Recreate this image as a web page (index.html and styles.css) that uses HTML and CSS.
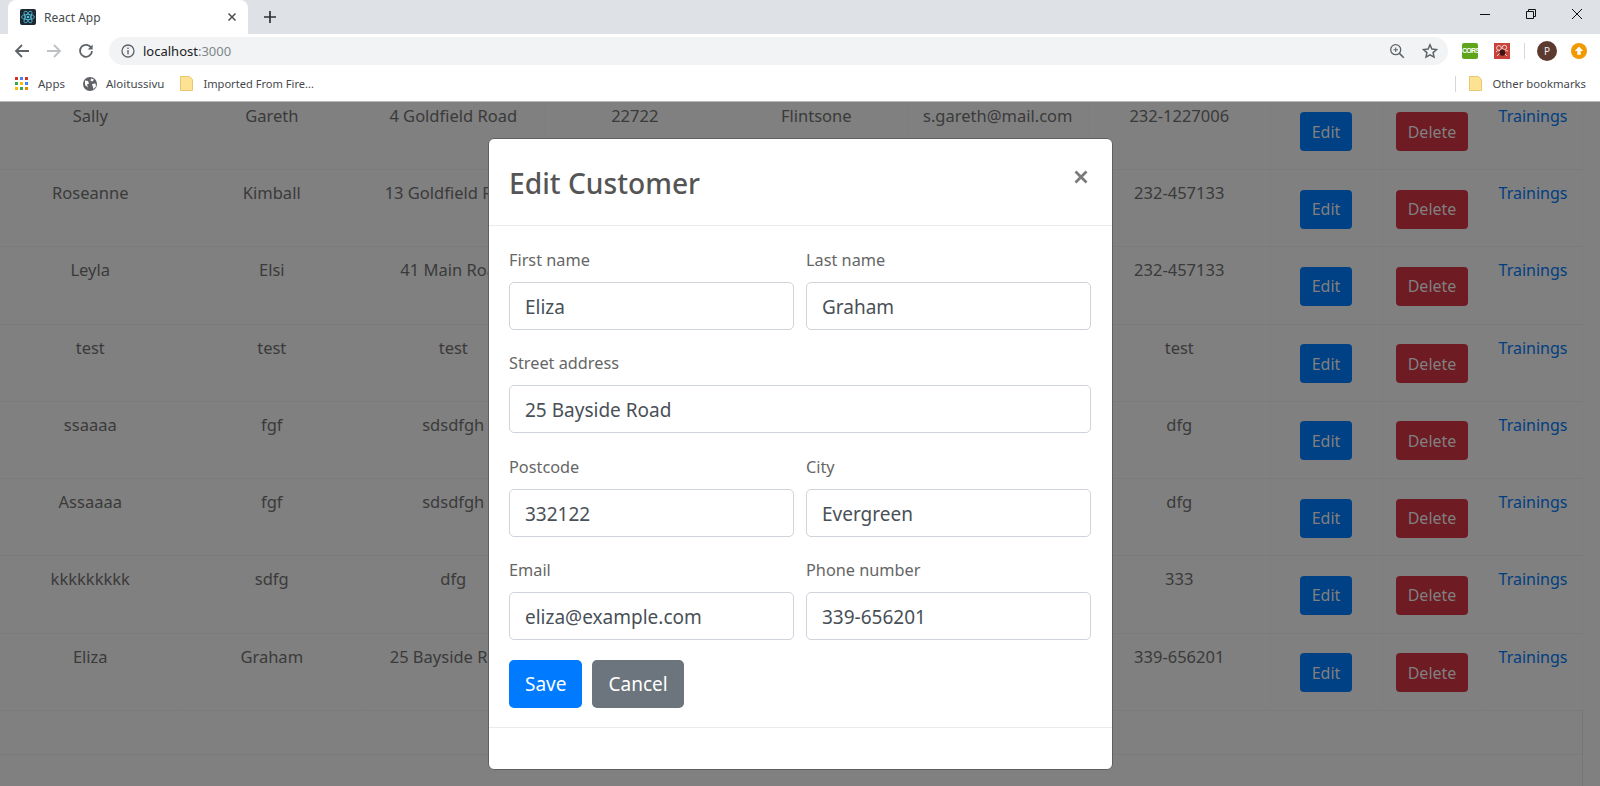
FILE: index.html
```html
<!DOCTYPE html>
<html lang="en">
<head>
  <meta charset="UTF-8" />
  <title>React App</title>
  <link rel="stylesheet" href="styles.css">
</head>
<body>
  <!-- browser chrome -->
  <div class="tabstrip">
    <div class="tab">
      <svg class="favicon" width="16" height="16" viewBox="0 0 16 16">
        <rect width="16" height="16" rx="2" fill="#1d2730"/>
        <g fill="none" stroke="#53c1de" stroke-width=".8">
          <ellipse cx="8" cy="8" rx="6.5" ry="2.6"/>
          <ellipse cx="8" cy="8" rx="6.5" ry="2.6" transform="rotate(60 8 8)"/>
          <ellipse cx="8" cy="8" rx="6.5" ry="2.6" transform="rotate(120 8 8)"/>
        </g>
        <circle cx="8" cy="8" r="1.3" fill="#53c1de"/>
      </svg>
      <span class="tab-title">React App</span>
      <svg class="tab-close" width="10" height="10" viewBox="0 0 10 10"><path d="M1.5 1.5l7 7M8.5 1.5l-7 7" stroke="#4a4d51" stroke-width="1.5"/></svg>
    </div>
    <svg class="new-tab" width="14" height="14" viewBox="0 0 14 14"><path d="M7 1v12M1 7h12" stroke="#2f3337" stroke-width="1.7"/></svg>
    <div class="window-controls">
      <svg width="12" height="12" viewBox="0 0 12 12"><path d="M1 6.5h10" stroke="#111" stroke-width="1"/></svg>
      <svg width="12" height="12" viewBox="0 0 12 12"><path d="M1.5 3.5h7v7h-7zM3.5 3.5v-2h7v7h-2" fill="none" stroke="#111" stroke-width="1"/></svg>
      <svg width="12" height="12" viewBox="0 0 12 12"><path d="M1 1l10 10M11 1l-10 10" stroke="#111" stroke-width="1"/></svg>
    </div>
  </div>

  <div class="toolbar">
    <svg class="nav-icon" width="16" height="16" viewBox="0 0 16 16"><path d="M15 8H2M8 2L2 8l6 6" fill="none" stroke="#5f6368" stroke-width="1.8"/></svg>
    <svg class="nav-icon" width="16" height="16" viewBox="0 0 16 16"><path d="M1 8h13M8 2l6 6-6 6" fill="none" stroke="#bdc1c6" stroke-width="1.8"/></svg>
    <svg class="nav-icon" width="16" height="16" viewBox="0 0 16 16"><path d="M13.4 5.2A6 6 0 1 0 14 8" fill="none" stroke="#5f6368" stroke-width="1.8"/><path d="M14.6 1.4v5h-5z" fill="#5f6368"/></svg>
    <div class="omnibox">
      <svg width="14" height="14" viewBox="0 0 14 14"><circle cx="7" cy="7" r="6" fill="none" stroke="#5f6368" stroke-width="1.3"/><path d="M7 6v4.2M7 3.6v1.4" stroke="#5f6368" stroke-width="1.4"/></svg>
      <span class="url">localhost<span class="url-port">:3000</span></span>
      <svg class="omni-zoom" width="16" height="16" viewBox="0 0 16 16"><circle cx="6.7" cy="6.7" r="5" fill="none" stroke="#5f6368" stroke-width="1.3"/><path d="M10.4 10.4l4.4 4.4" stroke="#5f6368" stroke-width="1.6"/><path d="M6.7 4.4v4.6M4.4 6.7H9" stroke="#5f6368" stroke-width="1.1"/></svg>
      <svg class="omni-star" width="16" height="16" viewBox="0 0 16 16"><path d="M8 1.8l1.9 4.2 4.6.5-3.4 3.1.9 4.5L8 11.8l-4 2.3.9-4.5-3.4-3.1 4.6-.5z" fill="none" stroke="#5f6368" stroke-width="1.5"/></svg>
    </div>
    <div class="extensions">
      <span class="ext-cors">CORS</span>
      <svg width="16" height="16" viewBox="0 0 16 16"><rect width="16" height="16" fill="#c8423a"/><g fill="none" stroke="#f3d3cd" stroke-width="1"><circle cx="5" cy="5" r="2.4"/><circle cx="10.5" cy="4.4" r="2.2"/><path d="M2 9c2-2 3-2 4-1M14 8c-2-1-3 0-4 1M3 13l3-3M13 13l-3-3"/></g><ellipse cx="8.4" cy="9.6" rx="2.8" ry="3.2" fill="#3c1512"/></svg>
      <span class="ext-sep"></span>
      <span class="avatar">P</span>
      <svg width="16" height="16" viewBox="0 0 16 16"><circle cx="8" cy="8" r="8" fill="#f29900"/><path d="M8 3.6L12.2 8H9.7v3.8H6.3V8H3.8z" fill="#fff"/></svg>
    </div>
  </div>

  <div class="bookmarks">
    <svg class="apps-icon" width="13" height="13" viewBox="0 0 13 13">
      <rect width="3" height="3" fill="#d93025"/><rect x="5" width="3" height="3" fill="#4285f4"/><rect x="10" width="3" height="3" fill="#d93025"/>
      <rect y="5" width="3" height="3" fill="#34a853"/><rect x="5" y="5" width="3" height="3" fill="#fbbc04"/><rect x="10" y="5" width="3" height="3" fill="#4285f4"/>
      <rect y="10" width="3" height="3" fill="#fbbc04"/><rect x="5" y="10" width="3" height="3" fill="#34a853"/><rect x="10" y="10" width="3" height="3" fill="#ea8600"/>
    </svg>
    <span class="bm-apps">Apps</span>
    <svg class="bm-globe" width="14" height="14" viewBox="0 0 14 14"><circle cx="7" cy="7" r="7" fill="#5f6368"/><path d="M2 3.5l3 .5 1 2.5-2 1 1 3-3-2.5zM8 1.5l3 1-1.5 2-2-.8zM9 7l3.5-.5.5 3-2.5 2.5z" fill="#fff"/></svg>
    <span class="bm-home">Aloitussivu</span>
    <svg class="bm-folder" width="13" height="15" viewBox="0 0 13 15"><path d="M.5.5h9l3 3v11H.5z" fill="#fde293" stroke="#e8c770"/></svg>
    <span class="bm-imported">Imported From Fire...</span>
    <span class="bm-sep"></span>
    <svg class="bm-folder-right" width="13" height="15" viewBox="0 0 13 15"><path d="M.5.5h9l3 3v11H.5z" fill="#fde293" stroke="#e8c770"/></svg>
    <span class="bm-other">Other bookmarks</span>
  </div>

  <!-- page -->
  <main class="page">
    <div class="customers">
      <div class="row">
        <div class="cell">Sally</div><div class="cell">Gareth</div><div class="cell">4 Goldfield Road</div><div class="cell">22722</div><div class="cell">Flintsone</div><div class="cell">s.gareth@mail.com</div><div class="cell">232-1227006</div>
        <div class="cell btn-cell"><button class="tbl-btn tbl-edit">Edit</button></div><div class="cell btn-cell"><button class="tbl-btn tbl-delete">Delete</button></div><div class="cell"><a class="link">Trainings</a></div>
      </div>
      <div class="row">
        <div class="cell">Roseanne</div><div class="cell">Kimball</div><div class="cell">13 Goldfield Road</div><div class="cell">33211</div><div class="cell">Flintsone</div><div class="cell">r.kimball@mail.com</div><div class="cell">232-457133</div>
        <div class="cell btn-cell"><button class="tbl-btn tbl-edit">Edit</button></div><div class="cell btn-cell"><button class="tbl-btn tbl-delete">Delete</button></div><div class="cell"><a class="link">Trainings</a></div>
      </div>
      <div class="row">
        <div class="cell">Leyla</div><div class="cell">Elsi</div><div class="cell">41 Main Road</div><div class="cell">33211</div><div class="cell">Flintsone</div><div class="cell">l.elsi@mail.com</div><div class="cell">232-457133</div>
        <div class="cell btn-cell"><button class="tbl-btn tbl-edit">Edit</button></div><div class="cell btn-cell"><button class="tbl-btn tbl-delete">Delete</button></div><div class="cell"><a class="link">Trainings</a></div>
      </div>
      <div class="row">
        <div class="cell">test</div><div class="cell">test</div><div class="cell">test</div><div class="cell">test</div><div class="cell">test</div><div class="cell">test</div><div class="cell">test</div>
        <div class="cell btn-cell"><button class="tbl-btn tbl-edit">Edit</button></div><div class="cell btn-cell"><button class="tbl-btn tbl-delete">Delete</button></div><div class="cell"><a class="link">Trainings</a></div>
      </div>
      <div class="row">
        <div class="cell">ssaaaa</div><div class="cell">fgf</div><div class="cell">sdsdfgh</div><div class="cell">dfg</div><div class="cell">dfg</div><div class="cell">dfg</div><div class="cell">dfg</div>
        <div class="cell btn-cell"><button class="tbl-btn tbl-edit">Edit</button></div><div class="cell btn-cell"><button class="tbl-btn tbl-delete">Delete</button></div><div class="cell"><a class="link">Trainings</a></div>
      </div>
      <div class="row">
        <div class="cell">Assaaaa</div><div class="cell">fgf</div><div class="cell">sdsdfgh</div><div class="cell">dfg</div><div class="cell">dfg</div><div class="cell">dfg</div><div class="cell">dfg</div>
        <div class="cell btn-cell"><button class="tbl-btn tbl-edit">Edit</button></div><div class="cell btn-cell"><button class="tbl-btn tbl-delete">Delete</button></div><div class="cell"><a class="link">Trainings</a></div>
      </div>
      <div class="row">
        <div class="cell">kkkkkkkkk</div><div class="cell">sdfg</div><div class="cell">dfg</div><div class="cell">333</div><div class="cell">dfg</div><div class="cell">dfg</div><div class="cell">333</div>
        <div class="cell btn-cell"><button class="tbl-btn tbl-edit">Edit</button></div><div class="cell btn-cell"><button class="tbl-btn tbl-delete">Delete</button></div><div class="cell"><a class="link">Trainings</a></div>
      </div>
      <div class="row">
        <div class="cell">Eliza</div><div class="cell">Graham</div><div class="cell">25 Bayside Road</div><div class="cell">332122</div><div class="cell">Evergreen</div><div class="cell">eliza@example.com</div><div class="cell">339-656201</div>
        <div class="cell btn-cell"><button class="tbl-btn tbl-edit">Edit</button></div><div class="cell btn-cell"><button class="tbl-btn tbl-delete">Delete</button></div><div class="cell"><a class="link">Trainings</a></div>
      </div>
      <div class="row row-empty"></div>
      <div class="row row-empty"></div>
    </div>

    <div class="modal">
      <div class="modal-header">
        <h4 class="modal-title">Edit Customer</h4>
        <svg class="modal-close" width="14" height="14" viewBox="0 0 14 14"><path d="M1.5 1.5l11 11M12.5 1.5l-11 11" stroke="#7b7b7b" stroke-width="2.8"/></svg>
      </div>
      <div class="modal-body">
        <div class="form-row">
          <label class="field"><span class="field-label">First name</span><input class="field-input" value="Eliza"></label>
          <label class="field"><span class="field-label">Last name</span><input class="field-input" value="Graham"></label>
        </div>
        <div class="form-row form-row-single">
          <label class="field"><span class="field-label">Street address</span><input class="field-input" value="25 Bayside Road"></label>
        </div>
        <div class="form-row">
          <label class="field"><span class="field-label">Postcode</span><input class="field-input" value="332122"></label>
          <label class="field"><span class="field-label">City</span><input class="field-input" value="Evergreen"></label>
        </div>
        <div class="form-row">
          <label class="field"><span class="field-label">Email</span><input class="field-input" value="eliza@example.com"></label>
          <label class="field"><span class="field-label">Phone number</span><input class="field-input" value="339-656201"></label>
        </div>
        <div class="form-actions">
          <button class="btn btn-save">Save</button>
          <button class="btn btn-cancel">Cancel</button>
        </div>
      </div>
      <div class="modal-footer"></div>
    </div>
  </main>
</body>
</html>
```

FILE: styles.css
```css
html, body {
  margin: 0;
  padding: 0;
  height: 786px;
  overflow: hidden;
  background: #fff;
  font-family: "Noto Sans", "Open Sans", sans-serif;
}

body {
  display: flex;
  flex-direction: column;
}

svg {
  display: block;
  flex: none;
}

/* browser chrome */
.tabstrip {
  height: 34px;
  flex: none;
  display: flex;
  align-items: center;
  background: #dee1e6;
}

.tab {
  width: 240px;
  height: 34px;
  margin-left: 8px;
  padding: 0 11px 0 12px;
  box-sizing: border-box;
  display: flex;
  align-items: center;
  background: #fff;
  border-radius: 8px 8px 0 0;
}

.tab-title {
  margin-left: 8px;
  font-size: 12px;
  color: #45494d;
  flex: 1;
}

.new-tab {
  margin-left: 15px;
}

.window-controls {
  margin-left: auto;
  padding-right: 17px;
  display: flex;
  gap: 34px;
  margin-top: -6px;
}

.toolbar {
  height: 34px;
  flex: none;
  display: flex;
  align-items: center;
  padding-left: 14px;
  gap: 16px;
  background: #fff;
}

.omnibox {
  width: 1339px;
  height: 28px;
  margin-left: -1px;
  padding: 0 10px 0 12px;
  box-sizing: border-box;
  display: flex;
  align-items: center;
  background: #f1f3f4;
  border-radius: 14px;
}

.url {
  margin-left: 8px;
  font-size: 13px;
  color: #202124;
  flex: 1;
}

.url-port {
  color: #80868b;
}

.omni-zoom {
  margin-right: 17px;
}

.extensions {
  display: flex;
  align-items: center;
  margin-left: -2px;
}

.ext-cors {
  width: 16px;
  height: 16px;
  background: #5ea51c;
  color: #fff;
  border-radius: 2px;
  font-family: "Liberation Sans", sans-serif;
  font-size: 7px;
  font-weight: bold;
  letter-spacing: -0.7px;
  line-height: 16px;
  text-align: center;
  margin-right: 16px;
}

.ext-sep {
  width: 1px;
  height: 16px;
  background: #d5d7da;
  margin: 0 12px 0 14px;
}

.avatar {
  width: 20px;
  height: 20px;
  border-radius: 50%;
  background: #5b3a30;
  color: #eee;
  font-size: 10px;
  line-height: 20px;
  text-align: center;
  margin-right: 14px;
}

.bookmarks {
  height: 34px;
  flex: none;
  box-sizing: border-box;
  display: flex;
  align-items: center;
  padding: 0 0 2px 15px;
  font-size: 11.5px;
  color: #45494d;
  background: #fff;
  border-bottom: 1px solid #b9b9b9;
}

.bm-apps {
  margin-left: 10px;
}

.bm-globe {
  margin-left: 18px;
}

.bm-home {
  margin-left: 9px;
}

.bm-folder {
  margin-left: 16px;
}

.bm-imported {
  margin-left: 10px;
  font-size: 11.1px;
}

.bm-sep {
  width: 1px;
  height: 16px;
  background: #d5d7da;
  margin-left: auto;
}

.bm-folder-right {
  margin-left: 13px;
}

.bm-other {
  margin-left: 10px;
  margin-right: 14px;
  font-size: 11.3px;
}

/* page, dimmed by the open dialog */
.page {
  flex: 1;
  position: relative;
  overflow: hidden;
  background: #808080;
  color: #3a3a3a;
  font-size: 16.5px;
}

.customers {
  width: 1583px;
  margin-top: -9.25px;
  border-right: 1px solid #777;
  box-sizing: border-box;
}

.row {
  height: 77.25px;
  box-sizing: border-box;
  display: grid;
  grid-template-columns: repeat(7, 181.5px) 112px 100px 100px;
  border-bottom: 1px solid #7a7a7a;
}

.row-empty {
  height: 44px;
}

.cell {
  padding-top: 11px;
  line-height: 24px;
  text-align: center;
  white-space: nowrap;
  border-right: 1px solid #7e7e7e;
}

.btn-cell {
  padding-top: 19.5px;
}

.tbl-btn {
  height: 39px;
  padding: 0 12px;
  border: none;
  border-radius: 4px;
  font-family: inherit;
  font-size: 16px;
  color: #808080;
}

.tbl-edit {
  background: #004084;
}

.tbl-delete {
  background: #6e1b23;
}

.link {
  margin-left: 2px;
  font-size: 16px;
  color: #003e80;
}

/* modal */
.modal {
  position: absolute;
  top: 36px;
  left: 488px;
  width: 625px;
  height: 632px;
  box-sizing: border-box;
  display: flex;
  flex-direction: column;
  background: #fff;
  border-radius: 6px;
  color: #555;
  border: 1px solid #5f5f5f;
}

.modal-header {
  height: 86px;
  flex: none;
  padding: 0 21px 0 20px;
  display: flex;
  justify-content: space-between;
  border-bottom: 1px solid #e9ecef;
}

.modal-title {
  margin: 0;
  font-size: 28.2px;
  font-weight: 500;
  line-height: 88px;
  color: #555;
}

.modal-close {
  margin: 31px 3px 0 0;
}

.modal-body {
  padding: 21px 20px 0;
  flex: 1;
}

.form-row {
  display: grid;
  grid-template-columns: 285px 285px;
  gap: 12px;
  margin-bottom: 20.3px;
}

.form-row-single {
  grid-template-columns: 582px;
}

.field {
  display: block;
}

.field-label {
  display: block;
  height: 26px;
  line-height: 26px;
  margin-bottom: 9px;
  font-size: 16.3px;
  color: #666;
}

.field-input {
  display: block;
  width: 100%;
  height: 48px;
  box-sizing: border-box;
  padding: 2px 15px 0;
  border: 1px solid #ced4da;
  border-radius: 5px;
  font-family: inherit;
  font-size: 19px;
  color: #495057;
  background: #fff;
}

.form-actions {
  display: flex;
  gap: 10px;
}

.btn {
  height: 48px;
  padding: 0 16px;
  border: none;
  border-radius: 5px;
  color: #fff;
  font-family: inherit;
  font-size: 19px;
}

.btn-save {
  background: #007bff;
}

.btn-cancel {
  background: #6c757d;
}

.modal-footer {
  height: 41px;
  flex: none;
  border-top: 1px solid #e9ecef;
}
```
